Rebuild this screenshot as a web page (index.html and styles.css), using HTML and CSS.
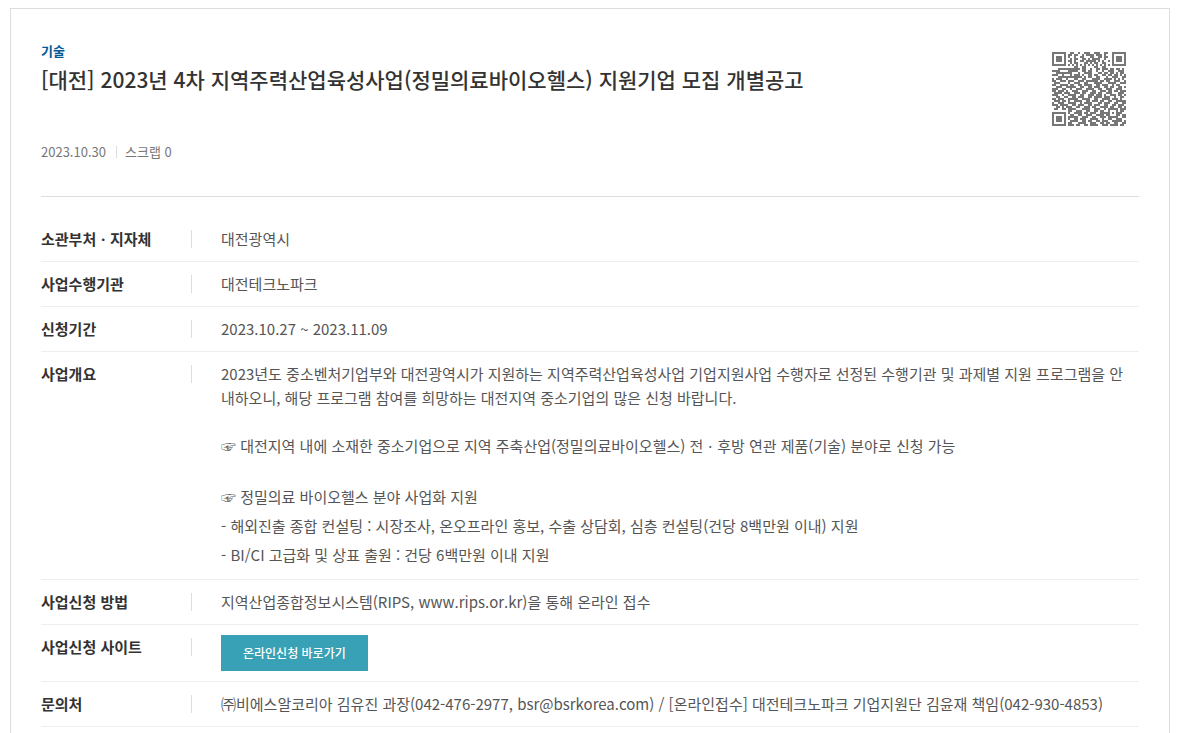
FILE: index.html
```html
<!DOCTYPE html>
<html lang="ko">
  <head>
    <meta charset="UTF-8" />
    <meta name="viewport" content="width=device-width, initial-scale=1.0" />
    <title>지원사업 공고</title>
    <link rel="stylesheet" href="styles.css">
  </head>
  <body>
    <main class="notice">
      <header class="notice-header">
        <div class="heading">
          <p class="category">기술</p>
          <h1>[대전] 2023년 4차 지역주력산업육성사업(정밀의료바이오헬스) 지원기업 모집 개별공고</h1>
          <div class="meta">
            <span>2023.10.30</span>
            <span class="scrap">스크랩 0</span>
          </div>
        </div>
        <svg class="qr" viewBox="0 0 37 37" shape-rendering="crispEdges" aria-hidden="true"><path /></svg>
      </header>
      <dl class="details">
        <div class="row">
          <dt>소관부처ㆍ지자체</dt>
          <dd>대전광역시</dd>
        </div>
        <div class="row">
          <dt>사업수행기관</dt>
          <dd>대전테크노파크</dd>
        </div>
        <div class="row">
          <dt>신청기간</dt>
          <dd>2023.10.27 ~ 2023.11.09</dd>
        </div>
        <div class="row">
          <dt>사업개요</dt>
          <dd>
            <p>2023년도 중소벤처기업부와 대전광역시가 지원하는 지역주력산업육성사업 기업지원사업 수행자로 선정된 수행기관 및 과제별 지원 프로그램을 안<br>내하오니, 해당 프로그램 참여를 희망하는 대전지역 중소기업의 많은 신청 바랍니다.</p>
            <p>☞ 대전지역 내에 소재한 중소기업으로 지역 주축산업(정밀의료바이오헬스) 전ㆍ후방 연관 제품(기술) 분야로 신청 가능</p>
            <p class="support">☞ 정밀의료 바이오헬스 분야 사업화 지원<br>- 해외진출 종합 컨설팅 : 시장조사, 온오프라인 홍보, 수출 상담회, 심층 컨설팅(건당 8백만원 이내) 지원<br>- BI/CI 고급화 및 상표 출원 : 건당 6백만원 이내 지원</p>
          </dd>
        </div>
        <div class="row">
          <dt>사업신청 방법</dt>
          <dd>지역산업종합정보시스템(RIPS, www.rips.or.kr)을 통해 온라인 접수</dd>
        </div>
        <div class="row">
          <dt>사업신청 사이트</dt>
          <dd><a class="apply" href="#">온라인신청 바로가기</a></dd>
        </div>
        <div class="row">
          <dt>문의처</dt>
          <dd>㈜비에스알코리아 김유진 과장(042-476-2977, bsr@bsrkorea.com) / [온라인접수] 대전테크노파크 기업지원단 김윤재 책임(042-930-4853)</dd>
        </div>
      </dl>
    </main>
    <script src="qr.js"></script>
  </body>
</html>
```
FILE: styles.css
```css
* {
  margin: 0;
  padding: 0;
  box-sizing: border-box;
}
body {
  background-color: #fff;
  color: #555;
  font-family: 'Noto Sans CJK KR', sans-serif;
  font-size: 15px;
  line-height: 24px;
}
.notice {
  min-height: calc(100vh - 8px);
  margin: 8px 8px 0 10px;
  padding: 30px 30px 0;
  border: 1px solid #ddd;
  border-bottom: 0;
}
.notice-header {
  display: flex;
  justify-content: space-between;
  align-items: flex-start;
  padding-bottom: 34px;
  border-bottom: 1px solid #ddd;
}
.category {
  color: #005a96;
  font-size: 13px;
  font-weight: bold;
}
h1 {
  color: #333;
  font-size: 21px;
  font-weight: 500;
  line-height: 32px;
}
.meta {
  display: flex;
  align-items: center;
  margin-top: 47px;
  color: #777;
  font-size: 13px;
  line-height: 20px;
}
.scrap {
  display: flex;
  align-items: center;
}
.scrap::before {
  content: '';
  width: 1px;
  height: 12px;
  margin: 0 8px 0 10px;
  background: #ddd;
}
.qr {
  flex: none;
  width: 74px;
  height: 74px;
  margin: 13px;
  fill: #777;
}
.details {
  padding-top: 20px;
}
.row {
  display: flex;
  align-items: flex-start;
  gap: 29px;
  padding: 10px 0;
  border-bottom: 1px solid #eee;
}
dt {
  display: flex;
  flex: none;
  justify-content: space-between;
  align-items: center;
  width: 151px;
  color: #333;
  font-weight: bold;
}
dt::after {
  content: '';
  width: 1px;
  height: 18px;
  background: #ddd;
}
dd {
  flex: 1;
}
dd p + p {
  margin-top: 24px;
}
.support {
  line-height: 29px;
}
.apply {
  display: inline-block;
  padding: 0 22px;
  background: #38a1b6;
  color: #fff;
  font-size: 12px;
  font-weight: 500;
  line-height: 36px;
  text-decoration: none;
  vertical-align: top;
}
```
FILE: qr.js
```js
// one string per line of modules, # is dark
const modules = [
  '#######..##..#..###..###..##..#######',
  '#.....#.##.##..#.####.###.#...#.....#',
  '#.###.#.#..#..##...##..##.##..#.###.#',
  '#.###.#..#.##..##.#.####..#...#.###.#',
  '#.###.#.##.#..##.#####.#.#..#.#.###.#',
  '#.....#..#.##...##.#.##..##...#.....#',
  '#######.#.#.#.#.#.#.#.#.#.#.#.#######',
  '...........##..##....##..##..........',
  '...###########.##..#..##.###.##.##.#.',
  '####....#####..##.##..#..#..###..###.',
  '..########...#..####...##.##.##.#.##.',
  '###..#...#.###.#..##.##..##.##.##.#.#',
  '...############.#.##..##...#..###..##',
  '#.###..#...##..##...####..####.#.#.#.',
  '##..###.###..###.######.##.##..###..#',
  '.###....#..###..##...####...####..###',
  '##..####.##..##.####..##.###..#.##...',
  '..###..#####..##..##.###..##.##..##.#',
  '###..##..#..###..####..##..###..###..',
  '##.###.#..###..###..##..###.##.##.###',
  '.####.###..###.##..###.##..###...###.',
  '###..#..####..##..###.###.#..###.##.#',
  '..##..##..##.###..##.####.###..#..##.',
  '##.###..#####..####..##..####.###.#..',
  '.###.##.#..####..##.###.##..##..#####',
  '#..###..####..#.####...##.###..##..##',
  '###.####..##.###..##.###..##..##.###.',
  '..##.#.###..##..###.##..####.##..##.#',
  '.##..##.####...####..###..#.#####.###',
  '........##..###..##..##.##..#...#.##.',
  '#######.#..####.##.###..#####.#.###..',
  '#.....#..##..##..###..####.##...##.##',
  '#.###.#.#####..###..##..###.#####..##',
  '#.###.#.#..##.###..####..#..##..###..',
  '#.###.#..####..##.##..##.###..#####.#',
  '#.....#.##...####..###..##.##..##..##',
  '#######.###.##..##.####..###.####.##.'
];
const path = document.querySelector('.qr path');
let shape = '';

modules.forEach((line, y) => {
  [...line].forEach((cell, x) => {
    if (cell === '#') {
      shape += `M${x} ${y}h1v1h-1z`;
    }
  });
});
path.setAttribute('d', shape);
```
